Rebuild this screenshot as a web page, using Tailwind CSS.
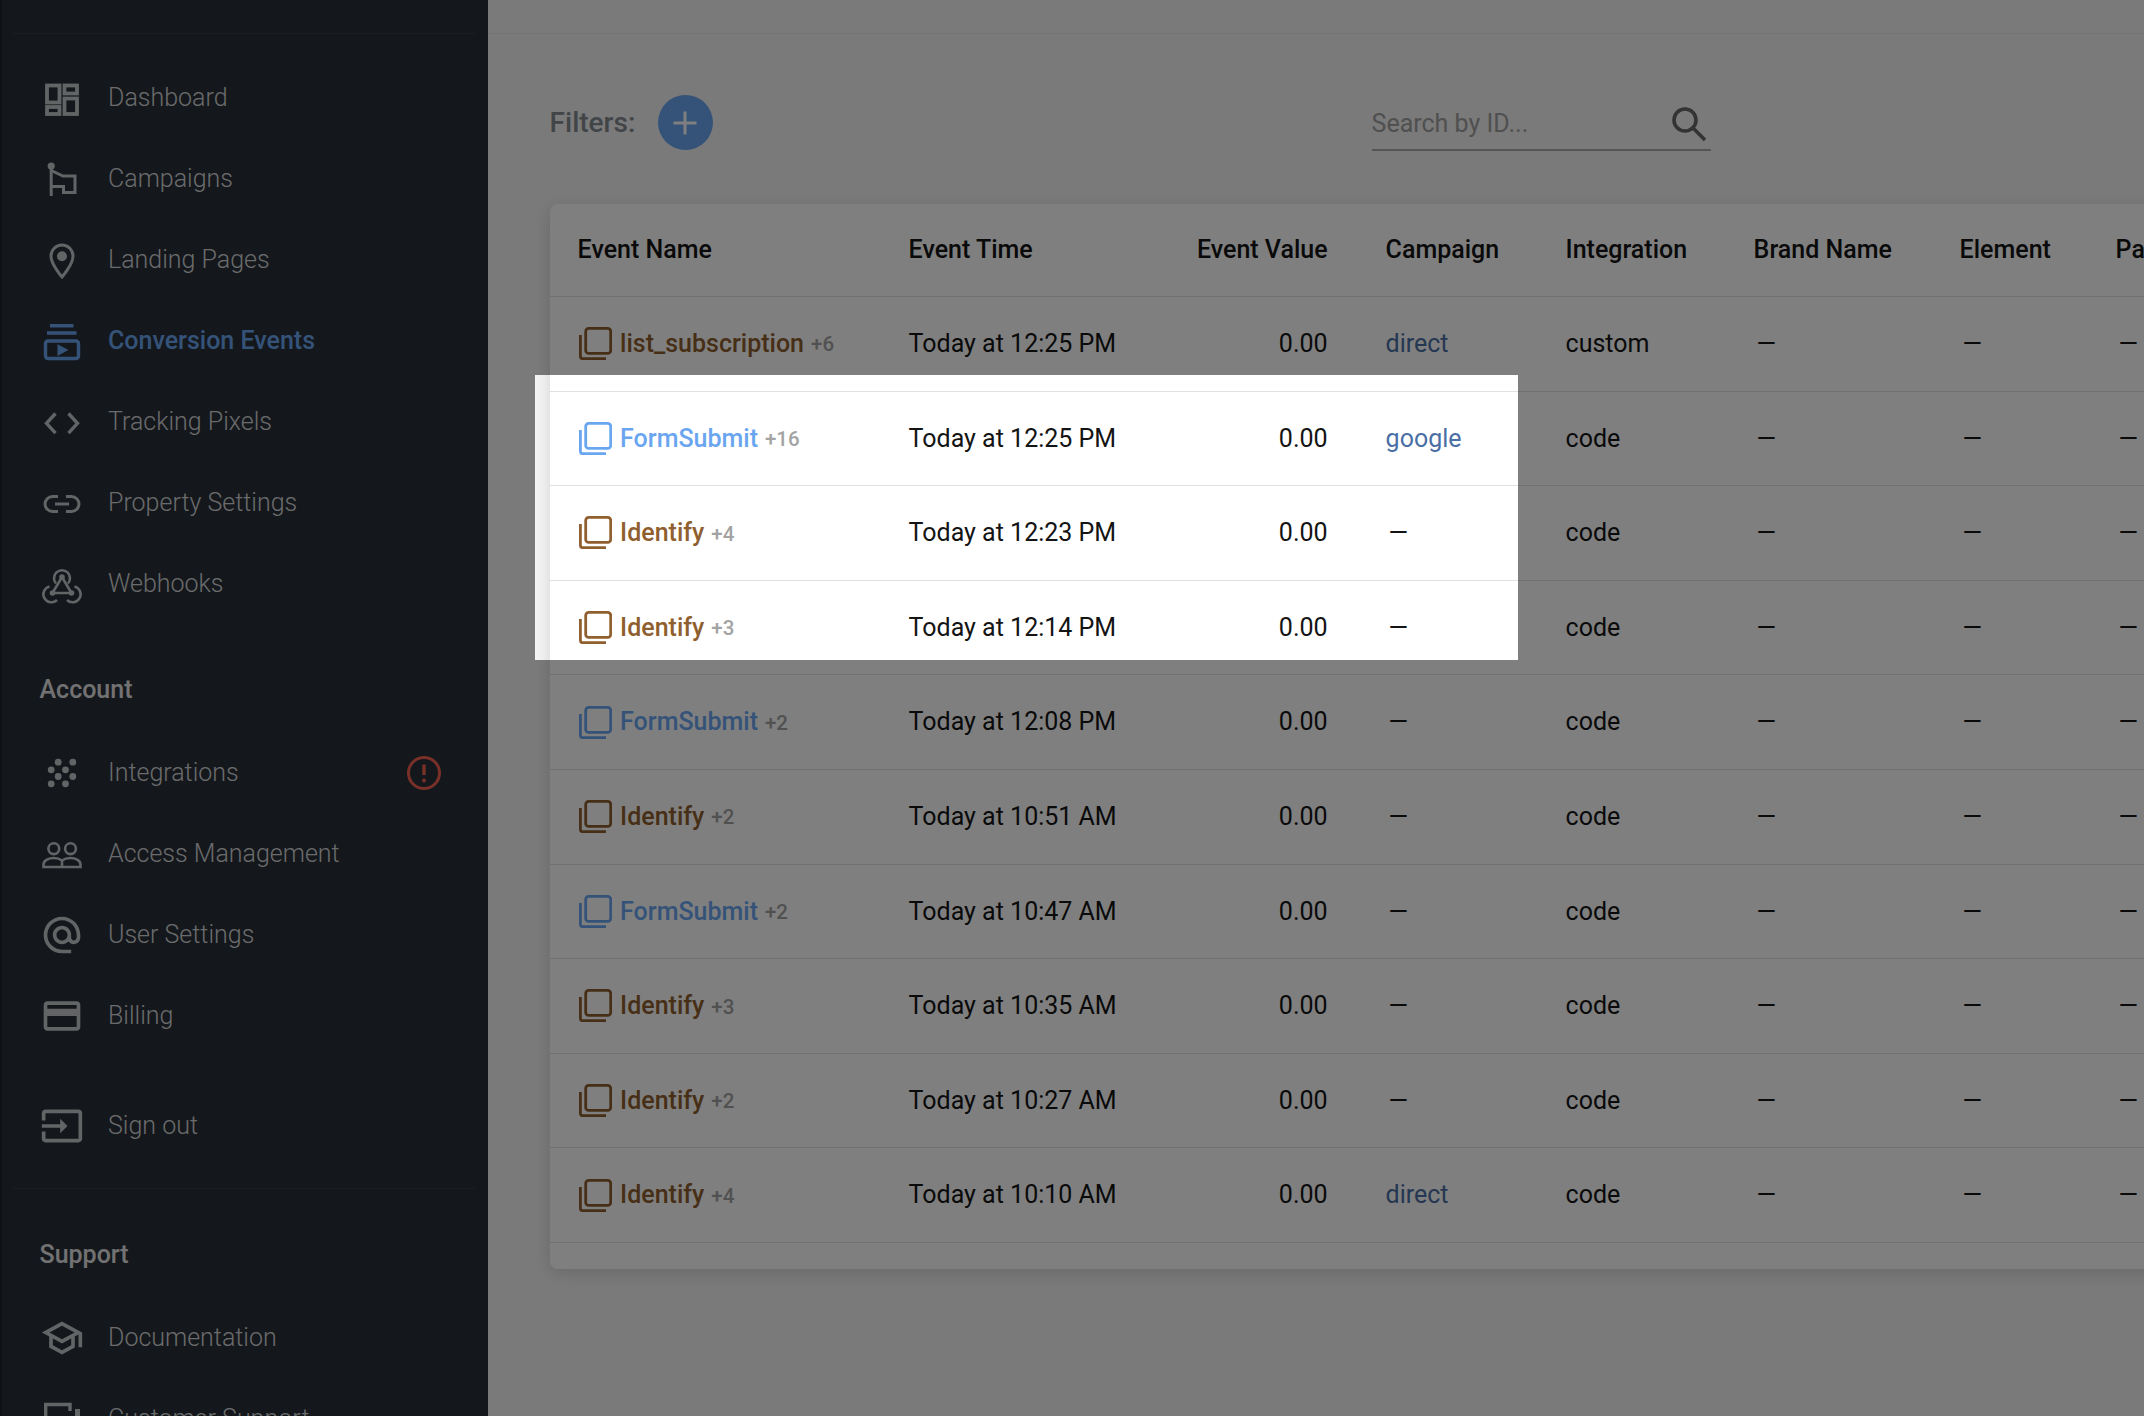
<!DOCTYPE html>
<html lang="en">
<head>
    <meta charset="UTF-8">
    <title>Conversion Events</title>
    <script src="https://cdn.jsdelivr.net/npm/@tailwindcss/browser@4"></script>
</head>
<body class="font-['Roboto',sans-serif]">
    <svg class="hidden">
        <symbol id="stack" viewBox="0 0 33 33">
            <rect x="6.7" y="1.4" width="25" height="25" rx="3" fill="none" stroke="currentColor" stroke-width="2.8"/>
            <path d="M1.4 8v21.5c0 1.5 .8 2.2 2.2 2.2H27" fill="none" stroke="currentColor" stroke-width="2.8"/>
        </symbol>
    </svg>

    <div class="relative flex h-[1416px] w-[2144px] overflow-hidden bg-[#f5f5f5]">
        <!-- sidebar -->
        <aside class="h-full w-[488px] shrink-0 overflow-hidden border-l-2 border-[#1e242a] bg-[#282f37] text-[25px] font-light text-[#d4d6d8]">
            <div class="mx-[10px] h-[34px] w-[464px] border-b border-[#343b44]"></div>
            <nav class="mt-[23.4px] [&_a]:flex [&_a]:h-[81px] [&_a]:items-center [&_a]:gap-[24.5px] [&_a]:pl-[37.5px] [&_svg]:h-[44px] [&_svg]:w-[44px] [&_svg]:shrink-0 [&_svg]:text-[#c4c8cc]">
                <a href="#"><svg viewBox="0 0 44 44" fill="none" stroke="currentColor" stroke-width="3.8"><rect x="7" y="9.5" width="12.5" height="17"/><rect x="24.5" y="9.5" width="12.5" height="8"/><rect x="7" y="31" width="12.5" height="7"/><rect x="24.5" y="22.5" width="12.5" height="15.5"/></svg>Dashboard</a>
                <a href="#"><svg viewBox="0 0 44 44" fill="none" stroke="currentColor" stroke-width="3"><path d="M11.2 8V39"/><circle cx="11.2" cy="9" r="3.6" fill="currentColor" stroke="none"/><path d="M11.2 13.5L23 19H35V35.5H23.5V29.5H11.2"/></svg>Campaigns</a>
                <a href="#"><svg viewBox="0 0 44 44" fill="none" stroke="currentColor" stroke-width="3"><path d="M22 39C22 39 11 26.5 11 18A11 11 0 0 1 33 18C33 26.5 22 39 22 39Z"/><circle cx="22" cy="18.3" r="5" fill="currentColor" stroke="none"/></svg>Landing Pages</a>
                <a href="#" class="font-medium text-[#6aa6f0]"><svg viewBox="0 0 44 44" fill="none" stroke="#6aa6f0" stroke-width="3.4"><path d="M10 6.7H33.5M7 14H36.5"/><rect x="5.5" y="22" width="33" height="17.5" rx="2.5"/><path d="M17.5 25.3V37L28.5 31Z" fill="#6aa6f0" stroke="none"/></svg>Conversion Events</a>
                <a href="#"><svg viewBox="0 0 44 44" fill="none" stroke="currentColor" stroke-width="3.4"><path d="M15.5 13.5L6.5 23.3L15.5 33.2M28.5 13.5L37.5 23.3L28.5 33.2"/></svg>Tracking Pixels</a>
                <a href="#"><svg viewBox="0 0 44 44" fill="none" stroke="currentColor" stroke-width="3"><path d="M18 15.5H12.5A7.5 7.5 0 0 0 12.5 30.5H18M26 15.5H31.5A7.5 7.5 0 0 1 31.5 30.5H26M15 23H29"/></svg>Property Settings</a>
                <a href="#"><svg viewBox="0 0 44 44" fill="none" stroke="currentColor" stroke-width="2.6"><path d="M16 21.5A8 8 0 1 1 28 21.5M17 38A8 8 0 1 1 9.5 24.5M27 38A8 8 0 1 0 34.5 24.5M22 15L12.5 31H31.5L22 15Z"/><circle cx="22" cy="15" r="2.8" fill="currentColor" stroke="none"/><circle cx="12.5" cy="31" r="2.8" fill="currentColor" stroke="none"/><circle cx="31.5" cy="31" r="2.8" fill="currentColor" stroke="none"/></svg>Webhooks</a>

                <h3 class="flex h-[108px] items-center pl-[37.5px] pt-[22px] font-medium text-[#e4e4e4]">Account</h3>

                <a href="#" class="relative"><svg viewBox="0 0 44 44" fill="currentColor"><circle cx="18.2" cy="11.2" r="3.4"/><circle cx="32.8" cy="11.2" r="3.4"/><circle cx="11.2" cy="18.8" r="3.4"/><circle cx="25.5" cy="18.8" r="3.4"/><circle cx="18.2" cy="25.5" r="3.4"/><circle cx="32.8" cy="25.5" r="3.4"/><circle cx="11.2" cy="32.8" r="3.4"/><circle cx="25.5" cy="32.8" r="3.4"/></svg>Integrations
                    <svg class="absolute left-[400px]" viewBox="0 0 44 44" fill="none" stroke="#f06050"><circle cx="22" cy="22" r="15.5" stroke-width="3"/><path d="M22 13.5V24" stroke-width="3.4"/><circle cx="22" cy="29.5" r="2" fill="#f06050" stroke="none"/></svg>
                </a>
                <a href="#"><svg viewBox="0 0 44 44" fill="none" stroke="currentColor" stroke-width="2.6"><circle cx="13.8" cy="16.7" r="5.4"/><circle cx="30.5" cy="16.7" r="5.4"/><path d="M3.5 35V32.5C3.5 28 9 26 14 26C17 26 20 27 22 28.5C24 27 27 26 30.5 26C35 26 40.5 28 40.5 32.5V35ZM22 28.5V35"/></svg>Access Management</a>
                <a href="#"><svg viewBox="0 0 24 24" fill="currentColor"><path d="M12 2C6.48 2 2 6.48 2 12s4.48 10 10 10h5v-2h-5c-4.34 0-8-3.66-8-8s3.66-8 8-8 8 3.66 8 8v1.43c0 .79-.71 1.57-1.5 1.57s-1.5-.78-1.5-1.57V12c0-2.76-2.24-5-5-5s-5 2.24-5 5 2.24 5 5 5c1.38 0 2.64-.56 3.54-1.47.65.89 1.77 1.47 2.96 1.47 1.97 0 3.5-1.6 3.5-3.57V12c0-5.52-4.48-10-10-10zm0 13c-1.66 0-3-1.34-3-3s1.34-3 3-3 3 1.34 3 3-1.34 3-3 3z"/></svg>User Settings</a>
                <a href="#"><svg viewBox="0 0 24 24" fill="currentColor"><path d="M20 4H4c-1.11 0-1.99.89-1.99 2L2 18c0 1.11.89 2 2 2h16c1.11 0 2-.89 2-2V6c0-1.11-.89-2-2-2zm0 14H4v-6h16v6zm0-10H4V6h16v2z"/></svg>Billing</a>

                <a href="#" class="mt-[29px]"><svg viewBox="0 0 24 24" fill="currentColor"><path d="M21 3.01H3c-1.1 0-2 .9-2 2V9h2V4.99h18v14.03H3V15H1v4.01c0 1.1.9 1.98 2 1.98h18c1.1 0 2-.88 2-1.98v-14c0-1.11-.9-2-2-2zM11 16l4-4-4-4v3H1v2h10v3z"/></svg>Sign out</a>

                <div class="ml-[10px] mt-[22px] w-[464px] border-b border-[#343b44]"></div>
                <h3 class="flex h-[108px] items-center pl-[37.5px] pt-[22px] font-medium text-[#e4e4e4]">Support</h3>

                <a href="#"><svg viewBox="0 0 24 24" fill="currentColor"><path d="M12 3L1 9l4 2.18v6L12 21l7-3.82v-6l2-1.09V17h2V9L12 3zm6.82 6L12 12.72 5.18 9 12 5.28 18.82 9zM17 15.99l-5 2.73-5-2.73v-3.72L12 15l5-2.73v3.72z"/></svg>Documentation</a>
                <a href="#"><svg viewBox="0 0 44 44" fill="none" stroke="currentColor" stroke-width="3.4"><path d="M5.7 32V7.5H30V14"/><rect x="35" y="12" width="5" height="22" fill="currentColor" stroke="none"/></svg>Customer Support</a>
            </nav>
        </aside>

        <!-- main -->
        <main class="min-w-0 flex-1 overflow-hidden">
            <div class="h-[34px] border-b border-[#e9e9e9]"></div>
            <div class="ml-[61.6px] mt-[61px] flex h-[55px] items-center">
                <span class="w-[108px] text-[28px] font-medium text-[#848a90]">Filters:</span>
                <button class="flex h-[55px] w-[55px] items-center justify-center rounded-full bg-[#6aa6f0]">
                    <svg class="h-[26px] w-[26px]" viewBox="0 0 26 26" stroke="#ffffff" stroke-width="3"><path d="M13 1.5V24.5M1.5 13H24.5"/></svg>
                </button>
                <div class="ml-[659px] mt-[1px] flex h-[55px] w-[339px] items-center justify-between border-b-2 border-[#aaaaaa] pr-[2px] pt-[4px]">
                    <span class="text-[25px] text-[#a0a0a0]">Search by ID...</span>
                    <svg class="mr-[2px] h-[36px] w-[36px]" viewBox="0 0 36 36" fill="none" stroke="#666666" stroke-width="3.6"><circle cx="14" cy="14" r="11"/><path d="M22 22L34 34"/></svg>
                </div>
            </div>

            <div class="ml-[61.6px] mt-[53.5px] h-[1065px] w-[1700px] overflow-hidden rounded-lg bg-white shadow-[0_4px_18px_rgba(0,0,0,0.14)]">
                <table class="w-full table-fixed text-left text-[25px] text-[#141414] [&_tbody_tr]:h-[94.6px] [&_td:nth-child(n+6)]:pl-[3px] [&_tr]:border-b [&_tr]:border-[#dfe1e3]">
                    <colgroup>
                        <col class="w-[359px]"><col class="w-[270px]"><col class="w-[149px]"><col class="w-[238px]"><col class="w-[188px]"><col class="w-[206px]"><col class="w-[156px]"><col>
                    </colgroup>
                    <thead class="font-medium">
                        <tr class="h-[93px]">
                            <th class="pl-[28px] font-medium">Event Name</th><th class="font-medium">Event Time</th><th class="whitespace-nowrap text-right font-medium">Event Value</th><th class="pl-[58px] font-medium">Campaign</th><th class="font-medium">Integration</th><th class="font-medium">Brand Name</th><th class="font-medium">Element</th><th class="font-medium">Page</th>
                        </tr>
                    </thead>
                    <tbody>
                        <tr>
                            <td class="pl-[29.5px]"><div class="flex items-center font-medium text-[#8f5f2f]"><svg class="mr-[8px] h-[33px] w-[33px]"><use href="#stack"/></svg>list_subscription<span class="ml-[7px] mt-[2px] text-[20.5px] text-[#a3a3a3]">+6</span></div></td>
                            <td>Today at 12:25 PM</td><td class="text-right">0.00</td><td class="pl-[58px] text-[#4a6fa5]">direct</td><td>custom</td><td>—</td><td>—</td><td>—</td>
                        </tr>
                        <tr>
                            <td class="pl-[29.5px]"><div class="flex items-center font-medium text-[#6aa6f0]"><svg class="mr-[8px] h-[33px] w-[33px]"><use href="#stack"/></svg>FormSubmit<span class="ml-[7px] mt-[2px] text-[20.5px] text-[#a3a3a3]">+16</span></div></td>
                            <td>Today at 12:25 PM</td><td class="text-right">0.00</td><td class="pl-[58px] text-[#4a6fa5]">google</td><td>code</td><td>—</td><td>—</td><td>—</td>
                        </tr>
                        <tr>
                            <td class="pl-[29.5px]"><div class="flex items-center font-medium text-[#8f5f2f]"><svg class="mr-[8px] h-[33px] w-[33px]"><use href="#stack"/></svg>Identify<span class="ml-[7px] mt-[2px] text-[20.5px] text-[#a3a3a3]">+4</span></div></td>
                            <td>Today at 12:23 PM</td><td class="text-right">0.00</td><td class="pl-[61px]">—</td><td>code</td><td>—</td><td>—</td><td>—</td>
                        </tr>
                        <tr>
                            <td class="pl-[29.5px]"><div class="flex items-center font-medium text-[#8f5f2f]"><svg class="mr-[8px] h-[33px] w-[33px]"><use href="#stack"/></svg>Identify<span class="ml-[7px] mt-[2px] text-[20.5px] text-[#a3a3a3]">+3</span></div></td>
                            <td>Today at 12:14 PM</td><td class="text-right">0.00</td><td class="pl-[61px]">—</td><td>code</td><td>—</td><td>—</td><td>—</td>
                        </tr>
                        <tr>
                            <td class="pl-[29.5px]"><div class="flex items-center font-medium text-[#6aa6f0]"><svg class="mr-[8px] h-[33px] w-[33px]"><use href="#stack"/></svg>FormSubmit<span class="ml-[7px] mt-[2px] text-[20.5px] text-[#a3a3a3]">+2</span></div></td>
                            <td>Today at 12:08 PM</td><td class="text-right">0.00</td><td class="pl-[61px]">—</td><td>code</td><td>—</td><td>—</td><td>—</td>
                        </tr>
                        <tr>
                            <td class="pl-[29.5px]"><div class="flex items-center font-medium text-[#8f5f2f]"><svg class="mr-[8px] h-[33px] w-[33px]"><use href="#stack"/></svg>Identify<span class="ml-[7px] mt-[2px] text-[20.5px] text-[#a3a3a3]">+2</span></div></td>
                            <td>Today at 10:51 AM</td><td class="text-right">0.00</td><td class="pl-[61px]">—</td><td>code</td><td>—</td><td>—</td><td>—</td>
                        </tr>
                        <tr>
                            <td class="pl-[29.5px]"><div class="flex items-center font-medium text-[#6aa6f0]"><svg class="mr-[8px] h-[33px] w-[33px]"><use href="#stack"/></svg>FormSubmit<span class="ml-[7px] mt-[2px] text-[20.5px] text-[#a3a3a3]">+2</span></div></td>
                            <td>Today at 10:47 AM</td><td class="text-right">0.00</td><td class="pl-[61px]">—</td><td>code</td><td>—</td><td>—</td><td>—</td>
                        </tr>
                        <tr>
                            <td class="pl-[29.5px]"><div class="flex items-center font-medium text-[#8f5f2f]"><svg class="mr-[8px] h-[33px] w-[33px]"><use href="#stack"/></svg>Identify<span class="ml-[7px] mt-[2px] text-[20.5px] text-[#a3a3a3]">+3</span></div></td>
                            <td>Today at 10:35 AM</td><td class="text-right">0.00</td><td class="pl-[61px]">—</td><td>code</td><td>—</td><td>—</td><td>—</td>
                        </tr>
                        <tr>
                            <td class="pl-[29.5px]"><div class="flex items-center font-medium text-[#8f5f2f]"><svg class="mr-[8px] h-[33px] w-[33px]"><use href="#stack"/></svg>Identify<span class="ml-[7px] mt-[2px] text-[20.5px] text-[#a3a3a3]">+2</span></div></td>
                            <td>Today at 10:27 AM</td><td class="text-right">0.00</td><td class="pl-[61px]">—</td><td>code</td><td>—</td><td>—</td><td>—</td>
                        </tr>
                        <tr>
                            <td class="pl-[29.5px]"><div class="flex items-center font-medium text-[#8f5f2f]"><svg class="mr-[8px] h-[33px] w-[33px]"><use href="#stack"/></svg>Identify<span class="ml-[7px] mt-[2px] text-[20.5px] text-[#a3a3a3]">+4</span></div></td>
                            <td>Today at 10:10 AM</td><td class="text-right">0.00</td><td class="pl-[58px] text-[#4a6fa5]">direct</td><td>code</td><td>—</td><td>—</td><td>—</td>
                        </tr>
                    </tbody>
                </table>
            </div>
        </main>

        <!-- spotlight: the hole lets three rows through, its shadow dims everything else -->
        <div class="pointer-events-none absolute left-[535px] top-[375px] h-[285px] w-[983px] shadow-[0_0_0_3000px_rgba(0,0,0,0.5)]"></div>
    </div>
</body>
</html>
